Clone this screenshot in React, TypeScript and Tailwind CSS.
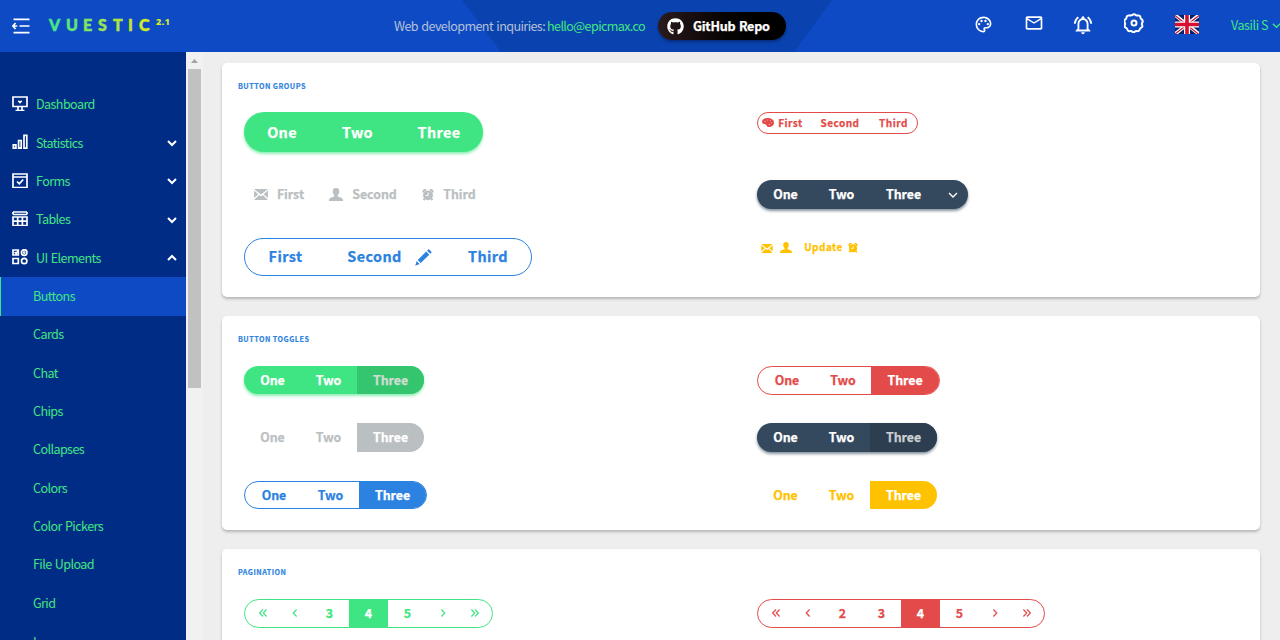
import React from "react";
import { FaGithub } from "react-icons/fa";
import { MdMailOutline, MdOutlineNotificationsActive, MdOutlinePalette } from "react-icons/md";

type Glyph = { className?: string };

const Mail = ({ className }: Glyph) => (
  <svg viewBox="0 0 14 11" className={className} fill="currentColor">
    <path d="M0 0h14L7 5.6zM0 1.5 4.3 5.2 0 8.9zM14 1.5v7.4L9.7 5.2zM5.2 6 7 7.4 8.8 6 14 11H0z" />
  </svg>
);
const Person = ({ className }: Glyph) => (
  <svg viewBox="0 0 14 13" className={className} fill="currentColor">
    <path d="M7 0c2.100 0 3.300 1.200 3.300 3.200 0 1.700-.6 3-1.500 3.800v1.300c0 .5 4.200 1.200 4.900 2.700.3.600.3 1.300.3 2H0c0-.7 0-1.400.3-2 .7-1.500 4.900-2.200 4.900-2.700V7C4.300 6.200 3.700 4.900 3.700 3.200 3.700 1.200 4.900 0 7 0z" />
  </svg>
);
const Alarm = ({ className }: Glyph) => (
  <svg viewBox="0 0 12 12" className={className}>
    <path d="M1.400 3.400A2 2 0 0 1 4 1M8 1a2 2 0 0 1 2.600 2.400M2.800 9.500 1.500 11.200M9.200 9.500l1.300 1.700" fill="none" stroke="currentColor" strokeWidth="2" />
    <circle cx="6" cy="6.300" r="4.900" fill="currentColor" />
    <path d="M6.200 3.500v3H3.800" fill="none" stroke="#fff" strokeWidth="1" />
  </svg>
);
const Pencil = ({ className }: Glyph) => (
  <svg viewBox="0 0 17 17" className={className} fill="currentColor">
    <path d="m13.700.1 3.100 3.100-1.600 1.600-3.100-3.100zM11.200 2.600l3.100 3.100-8.600 8.300-3-3zM1.700 12l3 3L.2 16.800z" />
  </svg>
);
const PaletteSolid = ({ className }: Glyph) => (
  <svg viewBox="0 0 12 9" className={className}>
    <path d="M5.500 0C9 0 12 1.700 12 4.500 12 7.300 9.800 9 7 9 4.300 9 4.800 6.700 3.300 6.200 2 5.900.2 6 .1 3.900 0 1.500 2.600 0 5.500 0z" fill="currentColor" />
    <g fill="#fff" opacity=".6"><circle cx="3" cy="3.300" r=".6" /><circle cx="5.500" cy="2" r=".5" /><circle cx="8.400" cy="2.500" r=".5" /><circle cx="9.600" cy="4.500" r=".5" /><circle cx="7.500" cy="6.400" r=".7" /></g>
  </svg>
);

const chevronPaths = {
  down: "M2 4l4 4 4-4",
  up: "M2 8l4-4 4 4",
  left: "M7.600 2.500 4.200 6l3.400 3.500",
  right: "M4.400 2.500 7.800 6 4.400 9.500",
  first: "M6 2.500 2.600 6 6 9.500M9.600 2.500 6.200 6l3.400 3.500",
  last: "M2.400 2.500 5.800 6 2.400 9.500M6 2.500 9.400 6 6 9.500",
};
const Chevron = ({ dir, className = "size-3 -translate-y-px", weight = 1.2 }: Glyph & { dir: keyof typeof chevronPaths; weight?: number }) => (
  <svg viewBox="0 0 12 12" className={className} fill="none" stroke="currentColor" strokeWidth={weight}>
    <path d={chevronPaths[dir]} />
  </svg>
);

const MenuIcon = () => (
  <svg viewBox="0 0 18 16" className="h-4 w-[18px]" fill="none" stroke="#fff" strokeWidth="1.700">
    <path d="M1.500 1.400h16M7.500 8h10M1.500 14.600h16M5.200 8H1M3.600 5 .9 8l2.700 3" />
  </svg>
);
const Gear = () => (
  <svg viewBox="0 0 20 20" className="size-5" fill="none" stroke="#fff" strokeWidth="2">
    <path strokeLinejoin="round" d="M8.200 2.200Q10 .2 11.800 2.200q.9.600 1.800.3 2.600-.5 2.900 2.100.1 1 .9 1.600 2.200 1.500.7 3.800-.5.900 0 1.800 1 2.300-1.200 3.100-1 .5-1.200 1.500-.5 2.300-3 1.700-1-.2-1.700.4-1.500 1.400-3 0-.700-.6-1.700-.4-2.500.6-3-1.700-.2-1-1.200-1.500-2.200-.8-1.200-3.100.5-.9 0-1.800-1.500-2.300.7-3.800.8-.6.9-1.600.3-2.600 2.900-2.100.9.300 1.800-.3z" />
    <circle cx="10" cy="10" r="2.500" />
  </svg>
);
const Flag = () => (
  <svg viewBox="0 0 24 19" className="h-[19px] w-6">
    <path fill="#012169" d="M0 0h24v19H0z" />
    <path stroke="#fff" strokeWidth="3.600" d="m0 0 24 19M24 0 0 19" />
    <path stroke="#c8102e" strokeWidth="1.200" d="m0 .5 24 19M24 .5 0 19" />
    <path stroke="#fff" strokeWidth="6" d="M12 0v19M0 9.500h24" />
    <path stroke="#d80f2e" strokeWidth="3.600" d="M12 0v19M0 9.500h24" />
  </svg>
);

const sideIcons: Record<string, React.ReactNode> = {
  Dashboard: (
    <>
      <path d="M1 1h14v9.500H1zM6 11v3.500M10 11v3.500M3.500 14.600h9" />
      <path d="M8 7.800 5.700 5.300q.6-1.500 2.300-.4 1.700-1.100 2.300.4z" fill="#fff" stroke="none" />
    </>
  ),
  Statistics: <path d="M1.300 10.800h2.600v3.400H1.300zM6.600 6.500h2.600v7.700H6.600zM12 1.300h2.800v12.900H12z" />,
  Forms: <path d="M1 1h14v13.500H1zM1 4h14M5 8.500l2.300 2.300L11.200 6.500" />,
  Tables: <path d="M1 1h14M1 3.500h14M1 6h14v8.500H1zM5.700 6v8.500M10.400 6v8.500M1 10.200h14M1 1v2.500M15 1v2.500" />,
  "UI Elements": (
    <>
      <path d="M1 1h5.300v5H1zM1 9.500h5.300v5H1zM2.600 3l1.500 1.500L6 2" />
      <circle cx="12.200" cy="3.600" r="2.800" /><circle cx="12.200" cy="3.600" r=".6" /><circle cx="12.200" cy="12" r="2.700" />
    </>
  ),
};
const sections: { label: string; arrow?: "down" | "up" }[] = [
  { label: "Dashboard" },
  { label: "Statistics", arrow: "down" },
  { label: "Forms", arrow: "down" },
  { label: "Tables", arrow: "down" },
  { label: "UI Elements", arrow: "up" },
];
const pages = ["Buttons", "Cards", "Chat", "Chips", "Collapses", "Colors", "Color Pickers", "File Upload", "Grid", "Icons"];

const Sidebar = () => (
  <aside className="h-full w-[186px] shrink-0 overflow-hidden bg-[#002c85] pt-[33.500px] text-[12.600px] tracking-[-0.600px] [word-spacing:1px] text-[#40e583]">
    {sections.map(({ label, arrow }) => (
      <div key={label} className="flex h-[38.350px] items-center pl-3 pr-2">
        <svg viewBox="0 0 16 15.500" className="mr-2 h-[15.500px] w-4 -translate-y-px" fill="none" stroke="#fff" strokeWidth="1.700">{sideIcons[label]}</svg>
        <span className="grow">{label}</span>
        {arrow && <Chevron dir={arrow} className="size-3" weight={2} />}
      </div>
    )).map((row, i) => <div key={i} className="[&>div>svg:last-child]:text-white">{row}</div>)}
    {pages.map((label, i) => (
      <div key={label} className={`flex h-[38.350px] items-center pl-8 ${i === 0 ? "border-l border-[#40e583] bg-[#0e4ac4]" : "ml-px"} ${i === 9 ? "pt-[2px]" : ""}`}>{label}</div>
    ))}
  </aside>
);

const logo: [string, string, string][] = [
  ["V", "w-[17px]", "text-[#4ae387]"],
  ["U", "w-[17px]", "text-[#63e276]"],
  ["E", "w-[15px]", "text-[#7fe263]"],
  ["S", "w-[15px]", "text-[#97e351]"],
  ["T", "w-[15px]", "text-[#aee43f]"],
  ["I", "w-[11px]", "text-[#c4e42e]"],
  ["C", "w-[17px]", "text-[#cfe923]"],
];

const Header = () => (
  <header className="relative flex h-[52px] shrink-0 items-center overflow-hidden bg-[#0e4ac4]">
    <svg viewBox="0 0 370 52" className="absolute left-[462px] top-0 h-[52px] w-[370px]"><path d="M0 0h370l-38 52H39z" fill="#0a43af" /></svg>
    <div className="relative flex w-[394px] shrink-0 items-center pl-3">
      <MenuIcon />
      <div className="ml-[19px] flex h-5 -translate-y-px text-[16px] font-black leading-5 [font-family:Lato,sans-serif]">
        {logo.map(([letter, width, color]) => <span key={letter} className={`${width} ${color} [-webkit-text-stroke:0.500px_currentColor]`}>{letter}</span>)}
        <span className="-mt-[3px] text-[9px] font-bold tracking-[0.500px] text-[#dcf01c] [-webkit-text-stroke:0.200px_currentColor] [font-family:'Noto_Sans',sans-serif]">2.1</span>
      </div>
    </div>
    <div className="relative flex shrink-0 items-center whitespace-nowrap text-[12.600px] text-[#b4c0d8]">
      <span className="w-[153px] tracking-[-0.600px] [word-spacing:1px]">Web development inquiries:</span>
      <span className="w-[111px] tracking-[-0.620px] text-[#40e583]">hello@epicmax.co</span>
      <button className="flex h-7 w-32 items-center rounded-full bg-gradient-to-r from-[#2a1b1c] to-black pl-[9px] text-[12.600px] font-bold tracking-[-0.250px] text-white shadow-[0_2px_3px_#001b5788] [-webkit-text-stroke:0.250px_currentColor] [word-spacing:1px]">
        <FaGithub className="mr-[9px] size-[17px]" />GitHub Repo
      </button>
    </div>
    <div className="relative ml-[189px] flex shrink-0 items-center text-white">
      <MdOutlinePalette className="mr-[30px] size-[19px] -translate-x-px -translate-y-[2px]" />
      <MdMailOutline className="mr-[29px] size-5 -translate-y-[3px]" />
      <MdOutlineNotificationsActive className="mr-[29px] size-[22px] -translate-x-px -translate-y-px" />
      <span className="mr-[31px] -translate-y-[3px]"><Gear /></span>
      <span className="mr-8 -translate-y-[2px]"><Flag /></span>
      <span className="w-[39px] -translate-y-px whitespace-nowrap text-[12.600px] tracking-[-0.450px] text-[#40e583]">Vasili S</span>
      <Chevron dir="down" className="ml-px size-[11px] shrink-0 -translate-y-px text-[#40e583]" weight={1.5} />
    </div>
  </header>
);

const Card = ({ title, height, children }: { title: string; height: string; children: React.ReactNode }) => (
  <section className={`${height} shrink-0 rounded-[5px] bg-white pl-4 shadow-[0_2px_3px_#0000003d]`}>
    <h2 className="flex h-[46px] items-center text-[7.200px] font-bold tracking-[0.470px] text-[#2c82e0] [-webkit-text-stroke:0.150px_currentColor]">{title}</h2>
    {children}
  </section>
);
const Row = ({ height, children }: { height: string; children: React.ReactNode }) => (
  <div className={`grid grid-cols-[513px_1fr] items-start pl-[6px] ${height}`}>{children}</div>
);

type Cell = { w: string; c: React.ReactNode; on?: string };
const Group = ({ cells, className }: { cells: Cell[]; className: string }) => (
  <div className={`flex w-fit overflow-hidden rounded-full font-bold [-webkit-text-stroke:0.250px_currentColor] ${className}`}>
    {cells.map(({ w, c, on = "" }, i) => (
      <button key={i} className={`flex items-center justify-center whitespace-nowrap ${w} ${on}`}>{c}</button>
    ))}
  </div>
);
const trio = (on: string, first = "w-14", second = "w-[57px]", third = "w-[67px]"): Cell[] => [
  { w: `${first} pl-px`, c: "One" },
  { w: second, c: "Two" },
  { w: third, c: "Three", on },
];
const pager = (numbers: string[], on: string): Cell[] => [
  { w: "w-9", c: <Chevron dir="first" /> },
  { w: "w-[29px] pr-[2px]", c: <Chevron dir="left" /> },
  ...numbers.map((n) => ({ w: "w-[39px]", c: n, on: n === "4" ? on : "" })),
  { w: "w-8", c: <Chevron dir="right" /> },
  { w: "w-[33px] pr-px", c: <Chevron dir="last" /> },
];

const label = "text-[12.400px] tracking-[-0.050px]";
const base = "h-[29px] text-[12.400px] tracking-[-0.050px]";

export default function App() {
  return (
    <div className="flex h-[640px] w-[1280px] flex-col overflow-hidden bg-[#eee] [font-family:'Noto_Sans_CJK_SC',sans-serif]">
      <Header />
      <div className="flex min-h-0 grow">
        <Sidebar />
        <div className="flex w-[17px] shrink-0 flex-col items-center bg-[#f1f1f1]">
          <svg viewBox="0 0 17 17" className="size-[17px] shrink-0"><path d="M5 11h7L8.500 7z" fill="#a3a3a3" /></svg>
          <div className="h-[319px] w-[13px] bg-[#c1c1c1]" />
        </div>
        <main className="flex grow flex-col gap-[19px] overflow-hidden pl-[19px] pr-5 pt-[11px]">
          <Card title="BUTTON GROUPS" height="h-[234px]">
            <Row height="mt-[3px] h-[68px]">
              <Group className="h-10 bg-[#40e583] text-[14.400px] tracking-[0.350px] text-white shadow-[0_2px_3px_#40e58399]" cells={[
                { w: "w-[76px]", c: "One" }, { w: "w-[75px]", c: "Two" }, { w: "w-[88px]", c: "Three" }]} />
              <Group className="h-[22px] border border-[#e34b4a] text-[10px] tracking-[0.500px] text-[#e34b4a]" cells={[
                { w: "w-[49px] pb-px", c: <><PaletteSolid className="mr-1 h-[9px] w-3" />First</> },
                { w: "w-[66px] pb-px", c: "Second" }, { w: "w-11 pb-px pr-[3px]", c: "Third" }]} />
            </Row>
            <Row height="h-[58px]">
              <Group className={`${base} text-[#babfc2]`} cells={[
                { w: "w-[70px]", c: <><Mail className="mr-[9px] h-[11px] w-[14px]" />First</> },
                { w: "w-[98px]", c: <><Person className="mr-[9px] h-[13px] w-[14px]" />Second</> },
                { w: "w-[74px]", c: <><Alarm className="mr-[9px] size-3" />Third</> }]} />
              <Group className={`${base} bg-[#34495e] text-white shadow-[0_2px_3px_#34495e99]`} cells={[
                ...trio(""), { w: "w-[31px]", c: <Chevron dir="down" weight={1.4} className="size-3" /> }]} />
            </Row>
            <Row height="h-[50px]">
              <Group className="h-[38px] border border-[#2c82e0] text-[14.400px] tracking-[0.400px] text-[#2c82e0]" cells={[
                { w: "w-[81px] pb-[2px]", c: "First" },
                { w: "w-[127px] pb-[2px]", c: <>Second<Pencil className="ml-[13px] size-[17px] translate-y-px" /></> },
                { w: "w-[74px] pb-[2px] pr-1", c: "Third" },
                { w: "w-1", c: null }]} />
              <Group className="h-5 text-[10px] tracking-[0.450px] text-[#ffc200]" cells={[
                { w: "w-[19px]", c: <Mail className="h-[9px] w-3" /> },
                { w: "w-5 pb-[2px]", c: <Person className="h-[11px] w-3" /> },
                { w: "w-[70px] pb-[3px]", c: <>Update<Alarm className="ml-[5px] size-[10px] translate-y-px" /></> }]} />
            </Row>
          </Card>
          <Card title="BUTTON TOGGLES" height="h-[214px]">
            <Row height="mt-[4px] h-[57px]">
              <Group className={`${label} h-7 bg-[#40e583] text-white shadow-[0_2px_3px_#40e58399]`} cells={trio("bg-[#36c56f] text-[#d0ddd3]")} />
              <Group className={`${base} border border-[#e34b4a] text-[#e34b4a]`} cells={trio("bg-[#e34b4a] text-white", "w-[57px]", "w-14", "w-[68px]")} />
            </Row>
            <Row height="h-[58px]">
              <Group className={`${base} text-[#babfc2]`} cells={trio("bg-[#babfc2] text-white")} />
              <Group className={`${base} bg-[#34495e] text-white shadow-[0_2px_3px_#34495e99]`} cells={trio("bg-[#2c3e50] text-[#cdd0d3]")} />
            </Row>
            <Row height="h-[40px]">
              <Group className={`${label} h-7 border border-[#2c82e0] text-[#2c82e0]`} cells={trio("bg-[#2c82e0] text-white", "w-[57px]", "w-[57px]", "w-[67px]")} />
              <Group className={`${label} h-7 text-[#ffc200]`} cells={trio("bg-[#ffc200] text-white")} />
            </Row>
          </Card>
          <Card title="PAGINATION" height="h-[120px]">
            <Row height="mt-[4px] h-10">
              <Group className={`${base} border border-[#40e583] text-[#40e583]`} cells={pager(["3", "4", "5"], "bg-[#40e583] text-white")} />
              <Group className={`${base} border border-[#e34b4a] text-[#e34b4a]`} cells={pager(["2", "3", "4", "5"], "bg-[#e34b4a] text-white")} />
            </Row>
          </Card>
        </main>
      </div>
    </div>
  );
}
